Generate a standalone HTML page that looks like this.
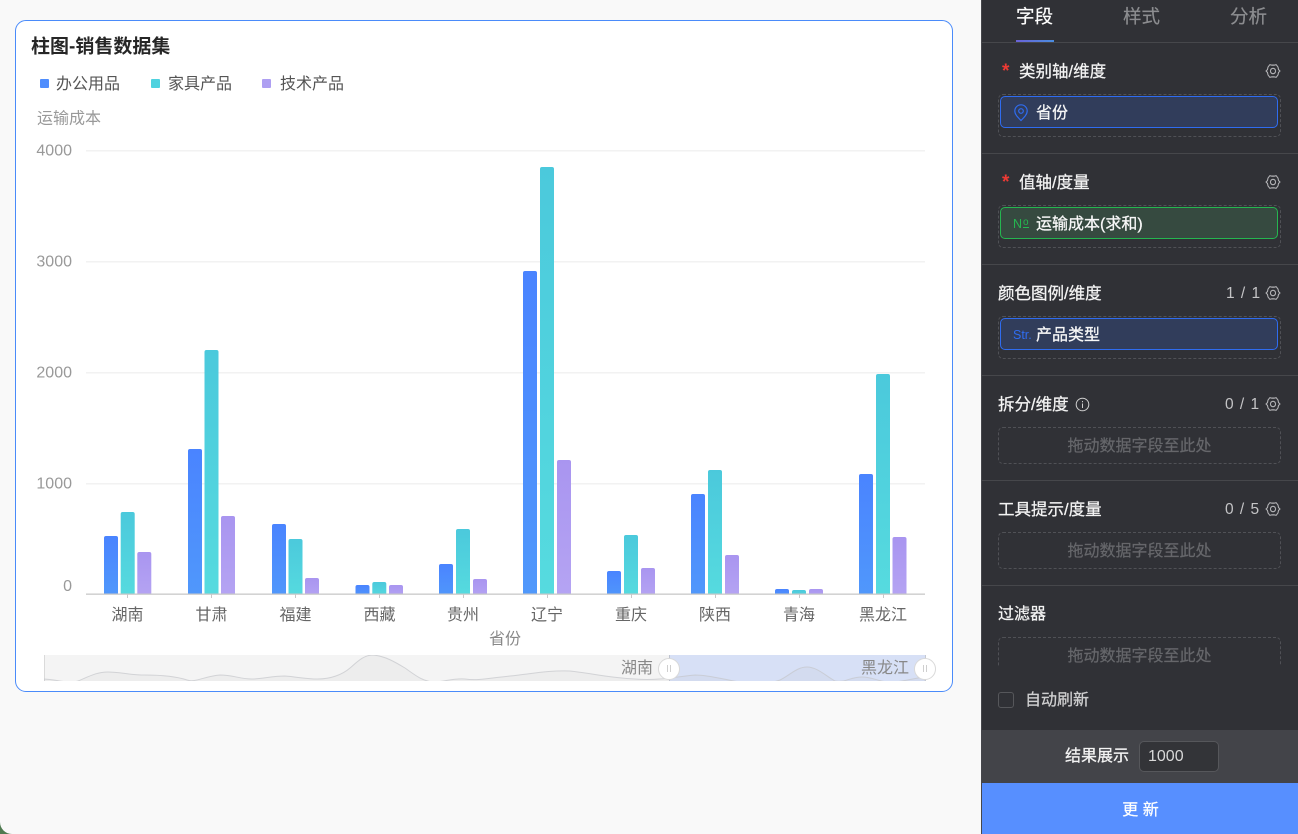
<!DOCTYPE html>
<html lang="zh" style="background:#f9f9f9">
<head>
<meta charset="utf-8">
<title>柱图-销售数据集</title>
<style>
*{box-sizing:border-box;margin:0;padding:0}
html,body{width:1298px;height:834px;overflow:hidden;background:#f9f9f9;font-family:"Liberation Sans","Noto Sans CJK SC",sans-serif}
.abs,.t{position:absolute}
#corner{position:absolute;left:0;top:820px;width:14px;height:14px;background:#4f7a50}
#main{position:absolute;left:0;top:0;width:1298px;height:834px;background:#f9f9f9;border-bottom-left-radius:12px;overflow:hidden}
#card{position:absolute;left:15px;top:20px;width:938px;height:672px;background:#fff;border:1px solid #4a8bfa;border-radius:11px}
#chart{position:absolute;left:0;top:0}
#panel{position:absolute;left:981px;top:0;width:317px;height:834px;overflow:hidden;background:#303136;border-left:1px solid #46474c}
.tab{position:absolute;top:4px;font-size:18.500px;line-height:26px;color:#8c8d90;white-space:nowrap;-webkit-text-stroke:.2px currentColor}
.lbl{position:absolute;font-size:16.500px;line-height:22px;color:#f4f4f4;white-space:nowrap;-webkit-text-stroke:.25px currentColor}
.cnt{position:absolute;font-size:15.500px;line-height:22px;color:#c4c4c6;white-space:nowrap;letter-spacing:1px}
.div{position:absolute;left:0;width:317px;height:1px;background:#46474b}
.drop{position:absolute;left:16px;width:283px;border:1px dashed #505156;border-radius:5px;text-align:center;color:#66676b;font-size:16px;-webkit-text-stroke:.2px currentColor}
.pill{position:absolute;left:18px;width:278px;height:32px;border-radius:5px;color:#f8f8f8;font-size:16px;line-height:30px;padding-left:35px;white-space:nowrap;-webkit-text-stroke:.25px currentColor;overflow:hidden}
.b{border:1px solid #2f6cf0;background:#313d5b}
.g{border:1px solid #25b650;background:#364a40}
.star{position:absolute;left:20px;color:#ee3a34;font-size:19px;font-weight:700;line-height:22px}
</style>
</head>
<body>
<div id="corner"></div>
<div id="main">
<div id="card"></div>
<svg id="chart" width="980" height="700" viewBox="0 0 980 700" xmlns="http://www.w3.org/2000/svg" font-family="'Liberation Sans','Noto Sans CJK SC',sans-serif">
<defs>
<linearGradient id="bl" x1="0" y1="0" x2="0" y2="1"><stop offset="0" stop-color="#4a84ff"/><stop offset="1" stop-color="#5098fb"/></linearGradient>
<linearGradient id="te" x1="0" y1="0" x2="0" y2="1"><stop offset="0" stop-color="#4bc9dc"/><stop offset="1" stop-color="#56dbdf"/></linearGradient>
<linearGradient id="pu" x1="0" y1="0" x2="0" y2="1"><stop offset="0" stop-color="#a995f0"/><stop offset="1" stop-color="#b5a4f3"/></linearGradient>
<clipPath id="cb"><rect x="80" y="140" width="860" height="454"/></clipPath>
<clipPath id="cm"><rect x="44" y="655" width="881" height="26"/></clipPath>
</defs>
<text x="31" y="52.500" font-size="19" font-weight="700" fill="#262626">柱图-销售数据集</text>
<rect x="40" y="79" width="9" height="9" rx="1" fill="#4f8dfd"/>
<text x="56" y="89" font-size="16" fill="#555">办公用品</text>
<rect x="151" y="79" width="9" height="9" rx="1" fill="#4fd2df"/>
<text x="168" y="89" font-size="16" fill="#555">家具产品</text>
<rect x="262" y="79" width="9" height="9" rx="1" fill="#ae9ff2"/>
<text x="280" y="89" font-size="16" fill="#555">技术产品</text>
<text x="37" y="123.500" font-size="16" fill="#999">运输成本</text>
<g font-size="16" fill="#999" text-anchor="end">
<text x="72" y="155.500">4000</text><text x="72" y="266.500">3000</text><text x="72" y="377.500">2000</text><text x="72" y="488.500">1000</text><text x="72" y="591">0</text>
</g>
<g fill="#f2f2f2"><rect x="86" y="150" width="839" height="1.500"/><rect x="86" y="261" width="839" height="1.500"/><rect x="86" y="372" width="839" height="1.500"/><rect x="86" y="483" width="839" height="1.500"/></g>
<g clip-path="url(#cb)">
<g fill="url(#bl)">
<rect x="104" y="536" width="14" height="62" rx="2"/><rect x="188" y="449" width="14" height="149" rx="2"/><rect x="272" y="524" width="14" height="74" rx="2"/><rect x="355.500" y="585" width="14" height="13" rx="2"/><rect x="439" y="564" width="14" height="34" rx="2"/><rect x="523" y="271" width="14" height="327" rx="2"/><rect x="607" y="571" width="14" height="27" rx="2"/><rect x="691" y="494" width="14" height="104" rx="2"/><rect x="775" y="589" width="14" height="9" rx="2"/><rect x="859" y="474" width="14" height="124" rx="2"/>
</g>
<g fill="url(#te)">
<rect x="120.700" y="512" width="14" height="86" rx="2"/><rect x="204.500" y="350" width="14" height="248" rx="2"/><rect x="288.500" y="539" width="14" height="59" rx="2"/><rect x="372.300" y="582" width="14" height="16" rx="2"/><rect x="456" y="529" width="14" height="69" rx="2"/><rect x="540" y="167" width="14" height="431" rx="2"/><rect x="624" y="535" width="14" height="63" rx="2"/><rect x="708" y="470" width="14" height="128" rx="2"/><rect x="792" y="590" width="14" height="8" rx="2"/><rect x="876" y="374" width="14" height="224" rx="2"/>
</g>
<g fill="url(#pu)">
<rect x="137.300" y="552" width="14" height="46" rx="2"/><rect x="221" y="516" width="14" height="82" rx="2"/><rect x="305" y="578" width="14" height="20" rx="2"/><rect x="389" y="585" width="14" height="13" rx="2"/><rect x="473" y="579" width="14" height="19" rx="2"/><rect x="557" y="460" width="14" height="138" rx="2"/><rect x="641" y="568" width="14" height="30" rx="2"/><rect x="725" y="555" width="14" height="43" rx="2"/><rect x="809" y="589" width="14" height="9" rx="2"/><rect x="892.500" y="537" width="14" height="61" rx="2"/>
</g>
</g>
<rect x="86" y="593.500" width="839" height="1.300" fill="#c8c8c8"/>
<g fill="#c8c8c8"><rect x="127" y="594" width="1" height="4"/><rect x="211" y="594" width="1" height="4"/><rect x="295" y="594" width="1" height="4"/><rect x="379" y="594" width="1" height="4"/><rect x="463" y="594" width="1" height="4"/><rect x="547" y="594" width="1" height="4"/><rect x="631" y="594" width="1" height="4"/><rect x="715" y="594" width="1" height="4"/><rect x="799" y="594" width="1" height="4"/><rect x="883" y="594" width="1" height="4"/></g>
<g font-size="16" fill="#666" text-anchor="middle">
<text x="127.500" y="620">湖南</text><text x="211.500" y="620">甘肃</text><text x="295.500" y="620">福建</text><text x="379.500" y="620">西藏</text><text x="463" y="620">贵州</text><text x="547" y="620">辽宁</text><text x="631" y="620">重庆</text><text x="715" y="620">陕西</text><text x="799" y="620">青海</text><text x="883" y="620">黑龙江</text>
</g>
<text x="505" y="644" font-size="16" fill="#888" text-anchor="middle">省份</text>

<rect x="44" y="655" width="881" height="26" fill="#f4f4f4"/>
<rect x="669" y="655" width="256" height="26" fill="#d7e0f6"/>
<rect x="44" y="655" width="0.800" height="26" fill="#d4d4d4"/>
<g clip-path="url(#cm)">
<path d="M44 679C60 680 68 684 78 681C88 677 96 672 108 672C120 672 130 675 145 675C160 675 175 676 187 680C195 683 205 676 220 675C233 675 240 679 252 679C262 679 272 676 285 676C298 677 305 679 318 679C330 679 342 675 350 668C358 661 364 655 373 655C385 656 395 662 405 668C415 675 422 681 433 682C445 682 452 678 465 679C478 681 490 678 510 676C530 674 550 670 570 671C590 673 610 678 635 679C660 681 680 676 695 675C710 675 725 680 740 682C755 683 770 684 780 680C790 675 797 667 807 667C817 667 826 676 835 681C845 683 850 677 862 677C874 677 880 683 895 682C905 681 915 678 925 677L925 690L44 690Z" fill="#b0b0b0" fill-opacity=".1" stroke="#c4c6cb" stroke-opacity=".7" stroke-width="1"/>
</g>
<g font-size="16" fill="#888" text-anchor="end"><text x="653" y="673">湖南</text><text x="909" y="673">黑龙江</text></g>
<rect x="669" y="655" width="0.800" height="26" fill="#b8bcc6"/><rect x="925" y="655" width="0.800" height="26" fill="#b8bcc6"/>
<circle cx="669" cy="669" r="10.500" fill="#fff" stroke="#d9d9d9"/>
<circle cx="925" cy="669" r="10.500" fill="#fff" stroke="#d9d9d9"/>
<g fill="#cfcfcf"><rect x="667" y="665" width="1" height="7"/><rect x="670" y="665" width="1" height="7"/><rect x="923" y="665" width="1" height="7"/><rect x="926" y="665" width="1" height="7"/></g>
</svg>
</div>

<div id="panel">
<div class="tab" style="left:34px;color:#fff">字段</div>
<div class="tab" style="left:141px">样式</div>
<div class="tab" style="left:248px">分析</div>
<div class="abs" style="left:34px;top:40px;width:38px;height:2px;background:linear-gradient(90deg,#6a62d8,#4a8de0)"></div>
<div class="div" style="top:42px"></div>

<div class="star" style="top:61px">*</div>
<div class="lbl" style="left:37px;top:61px">类别轴/维度</div>
<div class="drop" style="top:94px;height:43px"></div>
<div class="pill b" style="top:96px"><span style="position:relative;top:2px">省份</span></div>
<svg class="abs" style="left:31px;top:104px" width="16" height="18" viewBox="0 0 16 18" fill="none" stroke="#2f6cf0" stroke-width="1.200"><path d="M8 16.500C5 13.500 1.800 10.500 1.800 7A6.200 6.200 0 0 1 14.200 7C14.200 10.500 11 13.500 8 16.500Z"/><circle cx="8" cy="7" r="2.300"/></svg>
<div class="div" style="top:153px"></div>

<div class="star" style="top:172px">*</div>
<div class="lbl" style="left:37px;top:172px">值轴/度量</div>
<div class="drop" style="top:205px;height:43px"></div>
<div class="pill g" style="top:207px"><span style="position:relative;top:2px">运输成本(求和)</span></div>
<svg class="abs" style="left:31px;top:218px" width="18" height="12" viewBox="0 0 18 12" font-family="'Liberation Sans',sans-serif" fill="#25b650"><text x="0" y="10" font-size="12.500">N</text><text x="10" y="7" font-size="10">o</text><rect x="10" y="9" width="6" height="1"/></svg>
<div class="div" style="top:264px"></div>

<div class="lbl" style="left:16px;top:283px">颜色图例/维度</div>
<div class="cnt" style="left:244px;top:283px">1 / 1</div>
<div class="drop" style="top:316px;height:43px"></div>
<div class="pill b" style="top:318px"><span style="position:relative;top:2px">产品类型</span></div>
<div class="abs" style="left:31px;top:326px;font-size:12.500px;line-height:18px;color:#2f6cf0">Str.</div>
<div class="div" style="top:375px"></div>

<div class="lbl" style="left:16px;top:394px">拆分/维度</div>
<svg class="abs" style="left:93px;top:397px" width="15" height="15" viewBox="0 0 15 15" fill="none" stroke="#d0d0d0"><circle cx="7.500" cy="7.500" r="6.300"/><path d="M7.500 6.500V11M7.500 4V5.200"/></svg>
<div class="cnt" style="left:243px;top:394px">0 / 1</div>
<div class="drop" style="top:427px;height:37px;line-height:35px"><span style="position:relative;top:1px">拖动数据字段至此处</span></div>
<div class="div" style="top:480px"></div>

<div class="lbl" style="left:16px;top:499px">工具提示/度量</div>
<div class="cnt" style="left:243px;top:499px">0 / 5</div>
<div class="drop" style="top:532px;height:37px;line-height:35px"><span style="position:relative;top:1px">拖动数据字段至此处</span></div>
<div class="div" style="top:585px"></div>

<div class="lbl" style="left:16px;top:604px;font-size:16px">过滤器</div>
<div class="abs" style="left:0;top:637px;width:317px;height:29px;overflow:hidden">
<div class="drop" style="top:0;height:37px;line-height:35px"><span style="position:relative;top:1px">拖动数据字段至此处</span></div>
</div>

<div class="abs" style="left:16px;top:692px;width:16px;height:16px;border:1px solid #56575b;border-radius:3px"></div>
<div class="lbl" style="left:43px;top:690px;color:#cfcfd0;font-size:16px">自动刷新</div>

<div class="abs" style="left:0;top:730px;width:317px;height:53px;background:#434449"></div>
<div class="lbl" style="left:83px;top:746px;font-size:16px">结果展示</div>
<div class="abs" style="left:157px;top:741px;width:80px;height:31px;background:#333438;border:1px solid #56575b;border-radius:5px;color:#d8d8d8;font-size:16px;line-height:29px;padding-left:8px">1000</div>
<div class="abs" style="left:0;top:783px;width:317px;height:51px;background:#578fff;overflow:hidden;color:#fff;font-size:16px;line-height:51px;text-align:center;-webkit-text-stroke:.25px #fff"><span style="position:relative;top:2px">更 新</span></div>

<svg class="abs" style="left:0;top:0" width="317" height="834" viewBox="0 0 317 834" fill="none" stroke="#b4b4b7" stroke-width="1" stroke-linejoin="round">
<defs><g id="gear"><path d="M-6.600 0L-5.200-1.300L-4.700-3.500L-3-5.600L-1.300-5.200H1.300L3-5.600L4.700-3.500L5.200-1.300L6.600 0L5.200 1.300L4.700 3.500L3 5.600L1.300 5.200H-1.300L-3 5.600L-4.700 3.500L-5.200 1.300Z"/><circle r="2.400"/></g></defs>
<use href="#gear" transform="translate(291 71) scale(1.060 1.130)"/>
<use href="#gear" transform="translate(291 182) scale(1.060 1.130)"/>
<use href="#gear" transform="translate(291 293) scale(1.060 1.130)"/>
<use href="#gear" transform="translate(291 404) scale(1.060 1.130)"/>
<use href="#gear" transform="translate(291 509) scale(1.060 1.130)"/>
</svg>
</div>
</body>
</html>
